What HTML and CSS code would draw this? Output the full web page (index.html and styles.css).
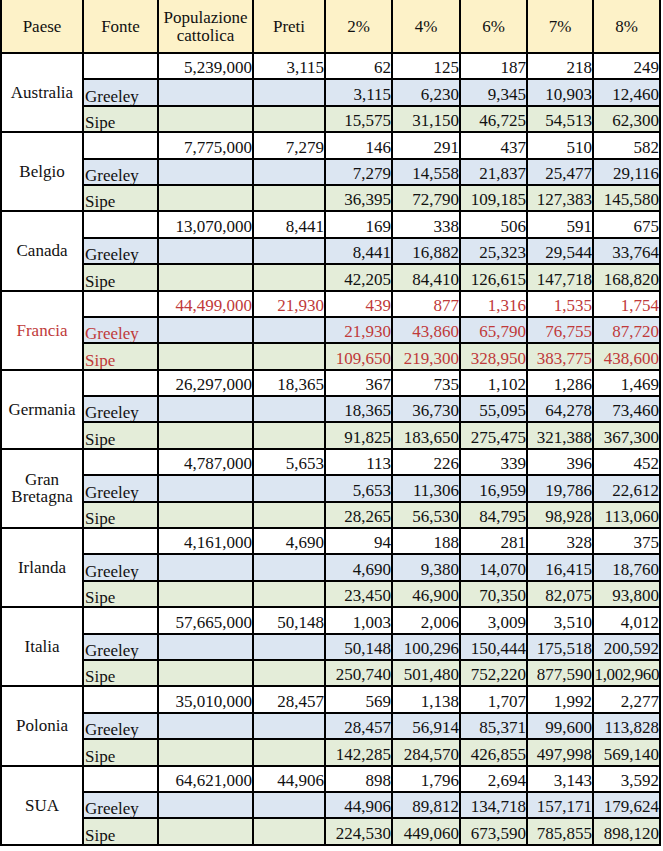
FILE: index.html
```html
<!DOCTYPE html>
<html lang="it">
<head>
<meta charset="utf-8">
<title>Preti</title>
<link rel="stylesheet" href="styles.css">
</head>
<body>
<table class="t">
<colgroup>
<col class="c-paese"><col class="c-fonte"><col class="c-pop"><col class="c-preti">
<col class="c-p1"><col class="c-p2"><col class="c-p3"><col class="c-p4"><col class="c-p5">
</colgroup>
<thead>
<tr class="hd"><th>Paese</th><th>Fonte</th><th>Populazione cattolica</th><th>Preti</th><th>2%</th><th>4%</th><th>6%</th><th>7%</th><th>8%</th></tr>
</thead>
<tbody>
<tr class="r pop"><td class="country" rowspan="3">Australia</td><td class="src"></td><td class="n">5,239,000</td><td class="n">3,115</td><td class="n">62</td><td class="n">125</td><td class="n">187</td><td class="n">218</td><td class="n">249</td></tr>
<tr class="r gr"><td class="src">Greeley</td><td></td><td></td><td class="n">3,115</td><td class="n">6,230</td><td class="n">9,345</td><td class="n">10,903</td><td class="n">12,460</td></tr>
<tr class="r si"><td class="src">Sipe</td><td></td><td></td><td class="n">15,575</td><td class="n">31,150</td><td class="n">46,725</td><td class="n">54,513</td><td class="n">62,300</td></tr>

<tr class="r pop"><td class="country" rowspan="3">Belgio</td><td class="src"></td><td class="n">7,775,000</td><td class="n">7,279</td><td class="n">146</td><td class="n">291</td><td class="n">437</td><td class="n">510</td><td class="n">582</td></tr>
<tr class="r gr"><td class="src">Greeley</td><td></td><td></td><td class="n">7,279</td><td class="n">14,558</td><td class="n">21,837</td><td class="n">25,477</td><td class="n">29,116</td></tr>
<tr class="r si"><td class="src">Sipe</td><td></td><td></td><td class="n">36,395</td><td class="n">72,790</td><td class="n">109,185</td><td class="n">127,383</td><td class="n">145,580</td></tr>

<tr class="r pop"><td class="country" rowspan="3">Canada</td><td class="src"></td><td class="n">13,070,000</td><td class="n">8,441</td><td class="n">169</td><td class="n">338</td><td class="n">506</td><td class="n">591</td><td class="n">675</td></tr>
<tr class="r gr"><td class="src">Greeley</td><td></td><td></td><td class="n">8,441</td><td class="n">16,882</td><td class="n">25,323</td><td class="n">29,544</td><td class="n">33,764</td></tr>
<tr class="r si"><td class="src">Sipe</td><td></td><td></td><td class="n">42,205</td><td class="n">84,410</td><td class="n">126,615</td><td class="n">147,718</td><td class="n">168,820</td></tr>

<tr class="r pop fr"><td class="country" rowspan="3">Francia</td><td class="src"></td><td class="n">44,499,000</td><td class="n">21,930</td><td class="n">439</td><td class="n">877</td><td class="n">1,316</td><td class="n">1,535</td><td class="n">1,754</td></tr>
<tr class="r gr fr"><td class="src">Greeley</td><td></td><td></td><td class="n">21,930</td><td class="n">43,860</td><td class="n">65,790</td><td class="n">76,755</td><td class="n">87,720</td></tr>
<tr class="r si fr"><td class="src">Sipe</td><td></td><td></td><td class="n">109,650</td><td class="n">219,300</td><td class="n">328,950</td><td class="n">383,775</td><td class="n">438,600</td></tr>

<tr class="r pop"><td class="country" rowspan="3">Germania</td><td class="src"></td><td class="n">26,297,000</td><td class="n">18,365</td><td class="n">367</td><td class="n">735</td><td class="n">1,102</td><td class="n">1,286</td><td class="n">1,469</td></tr>
<tr class="r gr"><td class="src">Greeley</td><td></td><td></td><td class="n">18,365</td><td class="n">36,730</td><td class="n">55,095</td><td class="n">64,278</td><td class="n">73,460</td></tr>
<tr class="r si"><td class="src">Sipe</td><td></td><td></td><td class="n">91,825</td><td class="n">183,650</td><td class="n">275,475</td><td class="n">321,388</td><td class="n">367,300</td></tr>

<tr class="r pop"><td class="country" rowspan="3">Gran Bretagna</td><td class="src"></td><td class="n">4,787,000</td><td class="n">5,653</td><td class="n">113</td><td class="n">226</td><td class="n">339</td><td class="n">396</td><td class="n">452</td></tr>
<tr class="r gr"><td class="src">Greeley</td><td></td><td></td><td class="n">5,653</td><td class="n">11,306</td><td class="n">16,959</td><td class="n">19,786</td><td class="n">22,612</td></tr>
<tr class="r si"><td class="src">Sipe</td><td></td><td></td><td class="n">28,265</td><td class="n">56,530</td><td class="n">84,795</td><td class="n">98,928</td><td class="n">113,060</td></tr>

<tr class="r pop"><td class="country" rowspan="3">Irlanda</td><td class="src"></td><td class="n">4,161,000</td><td class="n">4,690</td><td class="n">94</td><td class="n">188</td><td class="n">281</td><td class="n">328</td><td class="n">375</td></tr>
<tr class="r gr"><td class="src">Greeley</td><td></td><td></td><td class="n">4,690</td><td class="n">9,380</td><td class="n">14,070</td><td class="n">16,415</td><td class="n">18,760</td></tr>
<tr class="r si"><td class="src">Sipe</td><td></td><td></td><td class="n">23,450</td><td class="n">46,900</td><td class="n">70,350</td><td class="n">82,075</td><td class="n">93,800</td></tr>

<tr class="r pop"><td class="country" rowspan="3">Italia</td><td class="src"></td><td class="n">57,665,000</td><td class="n">50,148</td><td class="n">1,003</td><td class="n">2,006</td><td class="n">3,009</td><td class="n">3,510</td><td class="n">4,012</td></tr>
<tr class="r gr"><td class="src">Greeley</td><td></td><td></td><td class="n">50,148</td><td class="n">100,296</td><td class="n">150,444</td><td class="n">175,518</td><td class="n">200,592</td></tr>
<tr class="r si"><td class="src">Sipe</td><td></td><td></td><td class="n">250,740</td><td class="n">501,480</td><td class="n">752,220</td><td class="n">877,590</td><td class="n tight">1,002,960</td></tr>

<tr class="r pop"><td class="country" rowspan="3">Polonia</td><td class="src"></td><td class="n">35,010,000</td><td class="n">28,457</td><td class="n">569</td><td class="n">1,138</td><td class="n">1,707</td><td class="n">1,992</td><td class="n">2,277</td></tr>
<tr class="r gr"><td class="src">Greeley</td><td></td><td></td><td class="n">28,457</td><td class="n">56,914</td><td class="n">85,371</td><td class="n">99,600</td><td class="n">113,828</td></tr>
<tr class="r si"><td class="src">Sipe</td><td></td><td></td><td class="n">142,285</td><td class="n">284,570</td><td class="n">426,855</td><td class="n">497,998</td><td class="n">569,140</td></tr>

<tr class="r pop"><td class="country" rowspan="3">SUA</td><td class="src"></td><td class="n">64,621,000</td><td class="n">44,906</td><td class="n">898</td><td class="n">1,796</td><td class="n">2,694</td><td class="n">3,143</td><td class="n">3,592</td></tr>
<tr class="r gr"><td class="src">Greeley</td><td></td><td></td><td class="n">44,906</td><td class="n">89,812</td><td class="n">134,718</td><td class="n">157,171</td><td class="n">179,624</td></tr>
<tr class="r si"><td class="src">Sipe</td><td></td><td></td><td class="n">224,530</td><td class="n">449,060</td><td class="n">673,590</td><td class="n">785,855</td><td class="n">898,120</td></tr>
</tbody>
</table>
</body>
</html>
```

FILE: styles.css
```css
html, body {
  margin: 0;
  padding: 0;
  background: #ffffff;
}

.t {
  border-collapse: collapse;
  table-layout: fixed;
  width: 661px;
  font-family: "Liberation Serif", "Times New Roman", serif;
  font-size: 17px;
  color: #111111;
}

.c-paese { width: 82px; }
.c-fonte { width: 75px; }
.c-pop { width: 95px; }
.c-preti { width: 72px; }
.c-p1 { width: 67px; }
.c-p2 { width: 68px; }
.c-p3 { width: 67px; }
.c-p4 { width: 66px; }
.c-p5 { width: 67px; }

.t th,
.t td {
  border: 2px solid #000000;
  padding: 0;
  overflow: hidden;
  white-space: nowrap;
}

.hd {
  height: 53px;
}

.hd th {
  border-top: none;
  background: #fdf2c8;
  font-weight: normal;
  text-align: center;
  vertical-align: middle;
  line-height: 18px;
  white-space: normal;
  padding-top: 1px;
}

.r {
  height: 26.4px;
}

.r td {
  line-height: 19px;
  vertical-align: bottom;
  padding-bottom: 1px;
}

.pop td { background: #ffffff; }
.gr td { background: #dce6f2; }
.si td { background: #e4edd9; }

.r td.country {
  background: #ffffff;
  text-align: center;
  vertical-align: middle;
  white-space: normal;
  line-height: 17px;
  padding: 0;
}

.r td.src {
  text-align: left;
  padding-left: 1px;
  line-height: 16px;
  padding-bottom: 0;
}

.pop td.src { background: #ffffff; }

.n {
  text-align: right;
  padding-right: 1px;
}

.r td.tight {
  padding-right: 0;
  letter-spacing: -0.4px;
}

.fr td { color: #c03a3a; }
```
